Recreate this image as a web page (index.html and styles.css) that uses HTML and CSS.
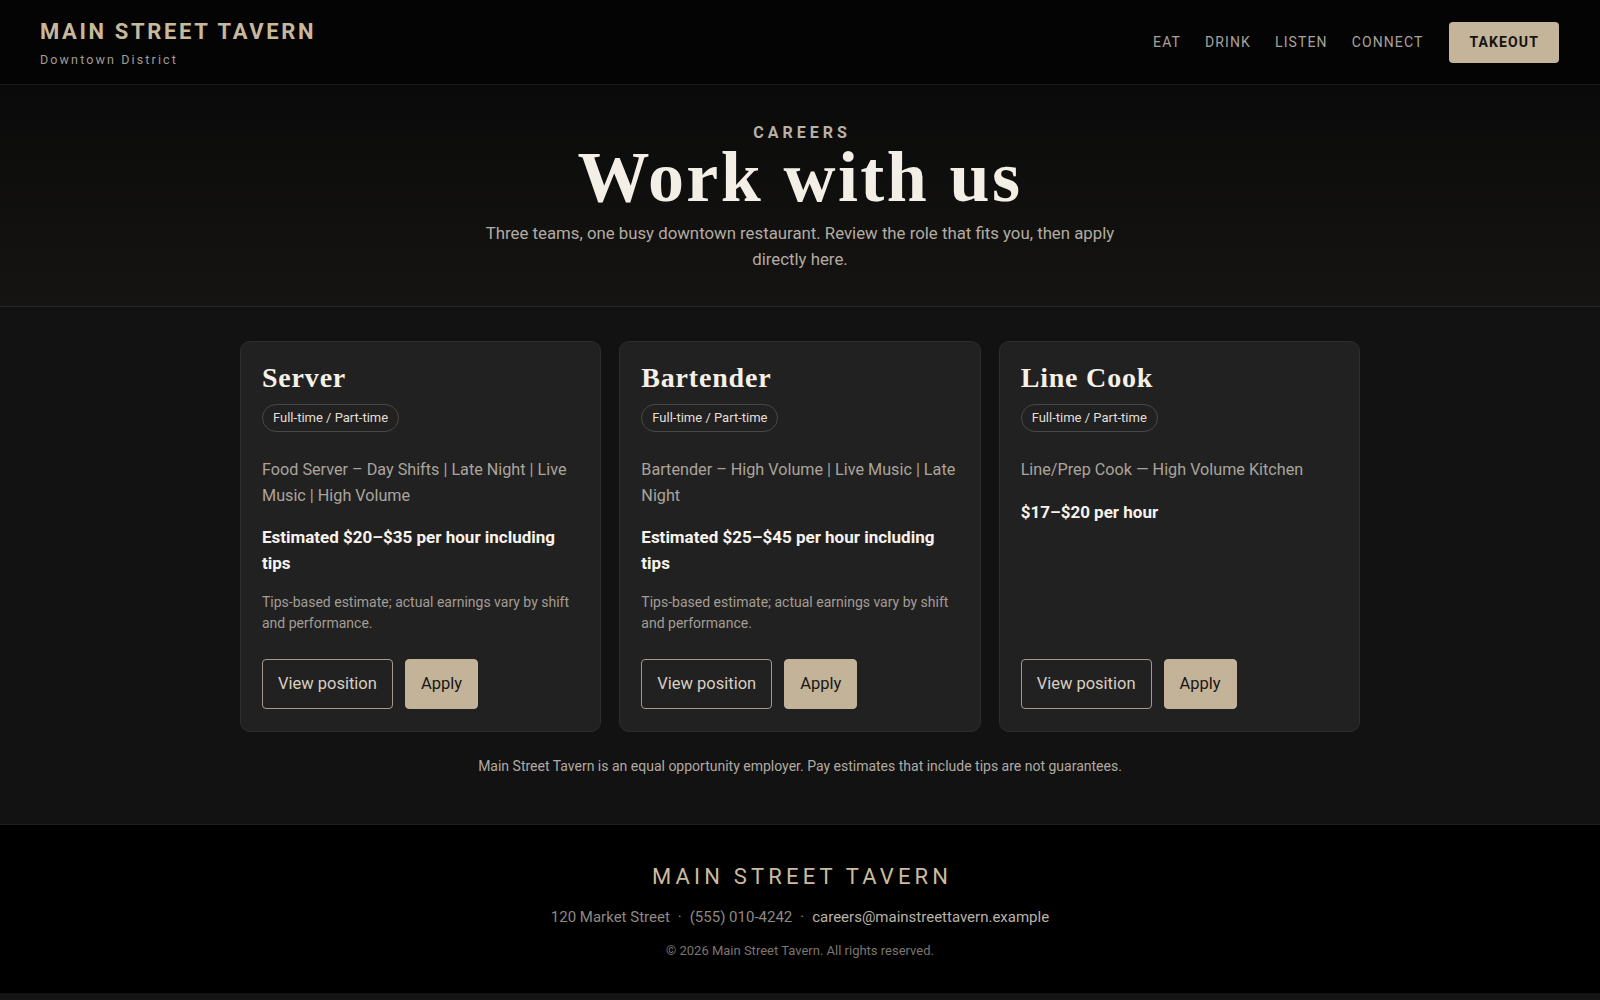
FILE: index.html
```html
<!DOCTYPE html>
<html lang="en">
<head>
<meta charset="utf-8">
<title>Careers — Main Street Tavern</title>
<link rel="stylesheet" href="styles.css">
</head>
<body>
<header class="site-header">
  <a class="brand" href="#">
    <span class="brand-name">MAIN STREET TAVERN</span>
    <span class="brand-sub">Downtown District</span>
  </a>
  <nav class="nav">
    <a href="#" class="nav-link">EAT</a>
    <a href="#" class="nav-link">DRINK</a>
    <a href="#" class="nav-link">LISTEN</a>
    <a href="#" class="nav-link">CONNECT</a>
    <a href="#" class="nav-cta">TAKEOUT</a>
  </nav>
</header>

<section class="hero">
  <p class="eyebrow">CAREERS</p>
  <h1 class="hero-title">Work with us</h1>
  <p class="hero-lede">Three teams, one busy downtown restaurant. Review the role that fits you, then apply directly here.</p>
</section>

<main class="jobs">
  <div class="job-grid">
    <article class="job-card">
      <h2 class="job-title">Server</h2>
      <span class="job-badge">Full-time / Part-time</span>
      <p class="job-desc">Food Server – Day Shifts | Late Night | Live Music | High Volume</p>
      <p class="job-pay">Estimated $20–$35 per hour including tips</p>
      <p class="job-note">Tips-based estimate; actual earnings vary by shift and performance.</p>
      <div class="job-actions">
        <a href="#" class="btn btn-outline">View position</a>
        <a href="#" class="btn btn-solid">Apply</a>
      </div>
    </article>
    <article class="job-card">
      <h2 class="job-title">Bartender</h2>
      <span class="job-badge">Full-time / Part-time</span>
      <p class="job-desc">Bartender – High Volume | Live Music | Late Night</p>
      <p class="job-pay">Estimated $25–$45 per hour including tips</p>
      <p class="job-note">Tips-based estimate; actual earnings vary by shift and performance.</p>
      <div class="job-actions">
        <a href="#" class="btn btn-outline">View position</a>
        <a href="#" class="btn btn-solid">Apply</a>
      </div>
    </article>
    <article class="job-card">
      <h2 class="job-title">Line Cook</h2>
      <span class="job-badge">Full-time / Part-time</span>
      <p class="job-desc">Line/Prep Cook — High Volume Kitchen</p>
      <p class="job-pay">$17–$20 per hour</p>
      <div class="job-actions">
        <a href="#" class="btn btn-outline">View position</a>
        <a href="#" class="btn btn-solid">Apply</a>
      </div>
    </article>
  </div>
  <p class="jobs-footnote">Main Street Tavern is an equal opportunity employer. Pay estimates that include tips are not guarantees.</p>
</main>

<footer class="site-footer">
  <p class="footer-name">MAIN STREET TAVERN</p>
  <p class="footer-contact"><span>120 Market Street</span><span class="sep">·</span><span>(555) 010-4242</span><span class="sep">·</span><a href="#" class="footer-email">careers@mainstreettavern.example</a></p>
  <p class="footer-copy">© 2026 Main Street Tavern. All rights reserved.</p>
</footer>
</body>
</html>
```

FILE: styles.css
```css
* { box-sizing: border-box; }

html, body {
  margin: 0;
  padding: 0;
}

body {
  background: #151515;
  color: #e8e3db;
  font-family: Roboto, "Noto Sans", "Liberation Sans", sans-serif;
  -webkit-font-smoothing: antialiased;
}

a { text-decoration: none; color: inherit; }
p, h1, h2 { margin: 0; }

/* Header */
.site-header {
  height: 85px;
  background: #040404;
  border-bottom: 1px solid #1c1a19;
  display: flex;
  align-items: center;
  justify-content: space-between;
  padding: 0 41px 0 40px;
}

.brand {
  display: flex;
  flex-direction: column;
  gap: 10px;
  margin-top: 3px;
}

.brand-name {
  font-size: 22px;
  font-weight: 700;
  letter-spacing: 0.12em;
  color: #c8b89c;
  line-height: 22px;
}

.brand-sub {
  font-size: 12.5px;
  letter-spacing: 0.17em;
  color: #a29c94;
  line-height: 14px;
}

.nav {
  display: flex;
  align-items: center;
  gap: 24px;
}

.nav-link {
  font-size: 14px;
  letter-spacing: 0.08em;
  color: #a7a29b;
}

.nav-cta {
  background: #c4b49a;
  color: #15130f;
  font-size: 14px;
  font-weight: 700;
  letter-spacing: 0.08em;
  line-height: 17px;
  padding: 12px 20px;
  border-radius: 4px;
  margin-left: 2px;
}

/* Hero */
.hero {
  background: linear-gradient(180deg, #0a0a0a 0%, #151412 100%);
  border-bottom: 1px solid #2a2826;
  text-align: center;
  padding: 39px 24px 34px;
}

.eyebrow {
  font-size: 16px;
  font-weight: 700;
  letter-spacing: 0.25em;
  line-height: 18px;
  color: #b8b1a7;
  padding-left: 0.25em;
}

.hero-title {
  font-family: "Liberation Serif", "DejaVu Serif", serif;
  font-size: 72px;
  font-weight: 700;
  line-height: 71px;
  color: #f3eee6;
  letter-spacing: 2.4px;
}

.hero-lede {
  max-width: 640px;
  margin: 8px auto 0;
  font-size: 16.8px;
  line-height: 25.5px;
  color: #b3aca2;
}

/* Jobs */
.jobs {
  background: #121212;
  padding: 34px 24px 47px;
}

.job-grid {
  max-width: 1120px;
  margin: 0 auto;
  display: grid;
  grid-template-columns: repeat(3, 1fr);
  gap: 18px;
}

.job-card {
  background: #212121;
  border: 1px solid #302e2c;
  border-radius: 10px;
  padding: 21px 21px 22px;
  display: flex;
  flex-direction: column;
  align-items: flex-start;
}

.job-title {
  font-family: "Liberation Serif", "DejaVu Serif", serif;
  font-size: 28px;
  font-weight: 700;
  line-height: 29px;
  letter-spacing: 0.8px;
  color: #f5f0e8;
}

.job-badge {
  margin-top: 12px;
  display: inline-block;
  font-size: 13px;
  line-height: 16px;
  padding: 5px 10px;
  border: 1px solid #4b4743;
  border-radius: 999px;
  color: #e4dfd7;
}

.job-desc {
  margin-top: 25px;
  font-size: 16.2px;
  line-height: 25.5px;
  color: #aaa49c;
}

.job-pay {
  margin-top: 17px;
  font-size: 17px;
  font-weight: 700;
  line-height: 25.5px;
  color: #f7f3ec;
}

.job-note {
  margin-top: 16px;
  font-size: 14px;
  line-height: 21px;
  color: #a39d95;
}

.job-actions {
  margin-top: auto;
  padding-top: 25px;
  display: flex;
  gap: 12px;
}

.btn {
  display: inline-block;
  font-size: 16.5px;
  line-height: 25.5px;
  padding: 11px 15px;
  border-radius: 4px;
  border: 1px solid transparent;
}

.btn-outline {
  border-color: #a6988a;
  color: #d8cfc1;
}

.btn-solid {
  background: #c3b399;
  border-color: #c3b399;
  color: #1a1714;
}

.jobs-footnote {
  margin-top: 24px;
  text-align: center;
  font-size: 14px;
  line-height: 21px;
  color: #b1aaa1;
}

/* Footer */
.site-footer {
  background: #000;
  border-top: 1px solid #201f1e;
  text-align: center;
  padding: 39px 24px 33px;
}

.footer-name {
  font-size: 22px;
  letter-spacing: 0.19em;
  line-height: 26px;
  color: #cbbb9f;
  padding-left: 0.19em;
}

.footer-contact {
  margin-top: 16px;
  font-size: 15px;
  line-height: 22px;
  color: #8e8983;
}

.sep {
  margin: 0 8px;
}

.footer-email {
  color: #b9b2a8;
}

.footer-copy {
  margin-top: 13px;
  font-size: 13px;
  line-height: 19px;
  color: #7b7670;
}
```
